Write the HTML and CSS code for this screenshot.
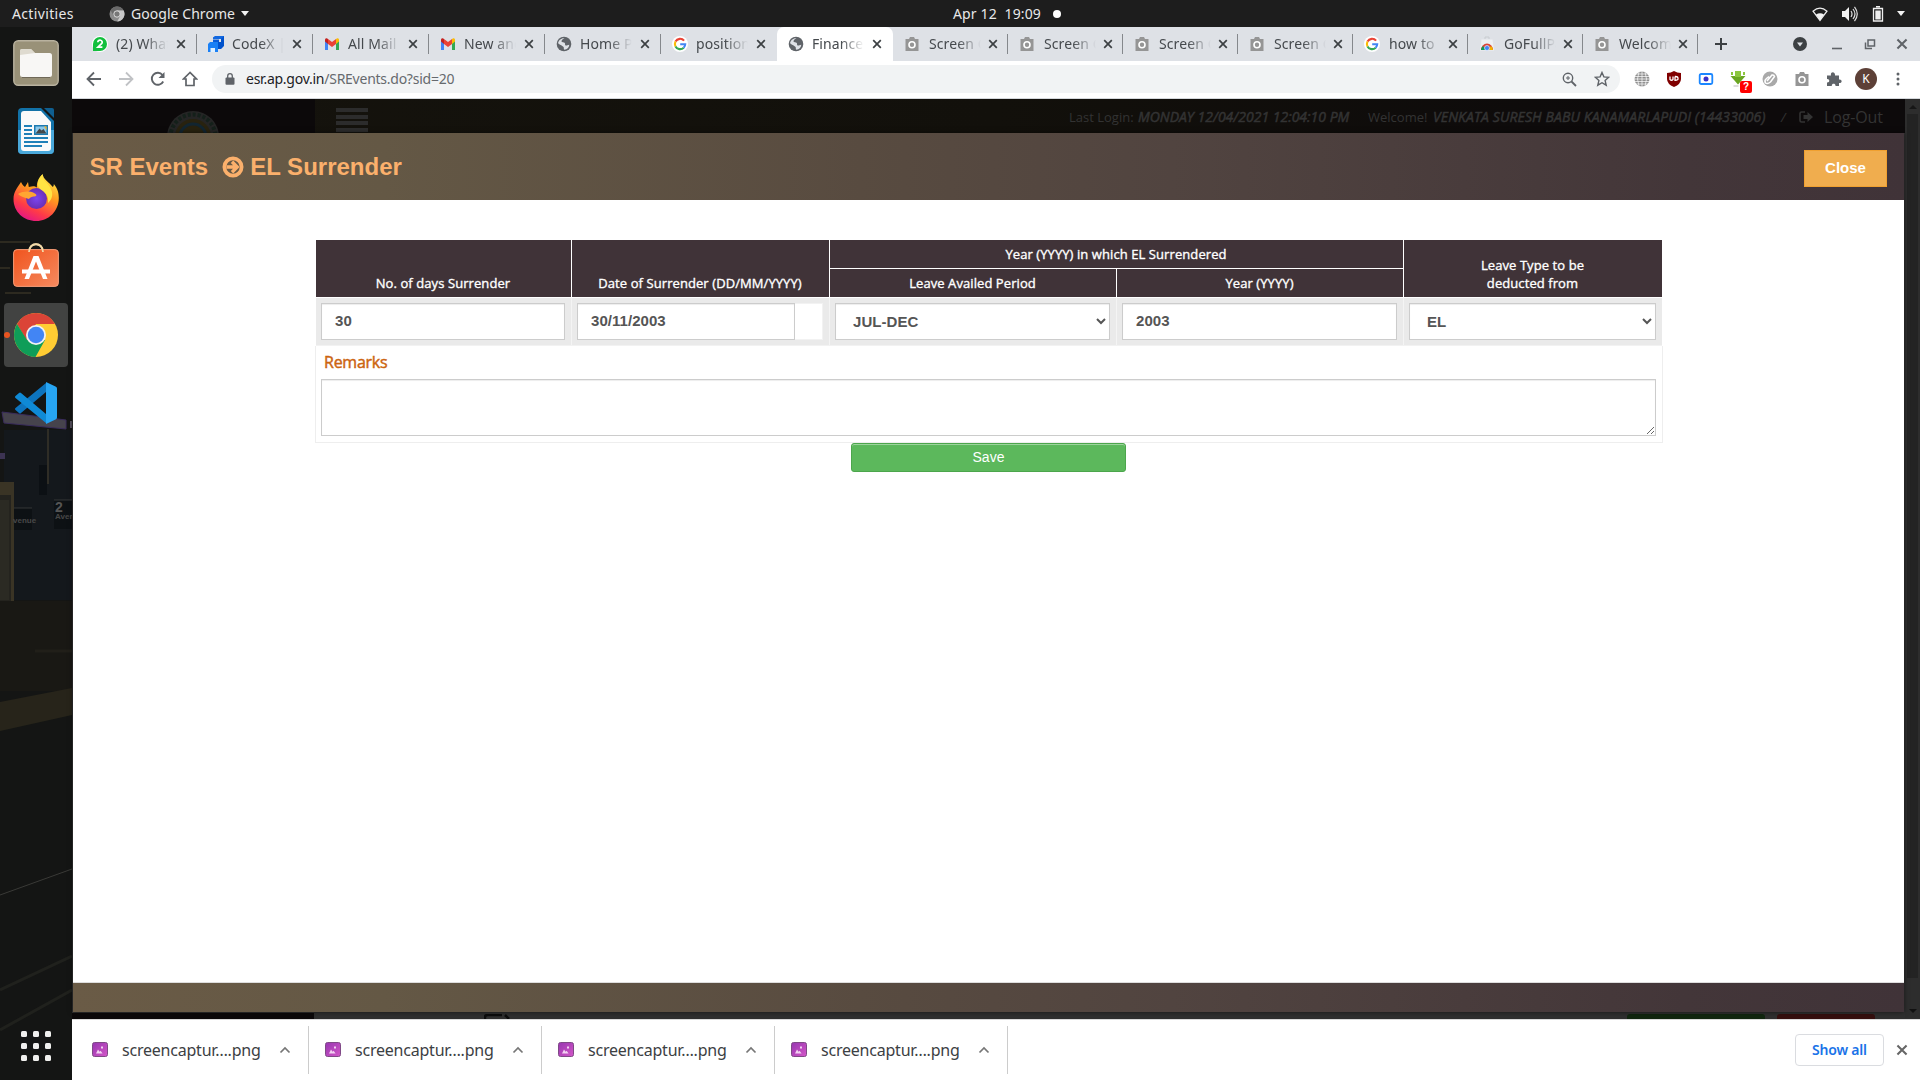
FILE: index.html
```html
<!DOCTYPE html>
<html lang="en">
<head>
<meta charset="utf-8">
<title>SR Events - EL Surrender</title>
<link rel="stylesheet" href="styles.css">
</head>
<body>
<svg class="defs" width="0" height="0">
  <defs>
    <linearGradient id="ffg" x1="0.8" y1="0" x2="0.3" y2="1"><stop offset="0" stop-color="#fff44f"/><stop offset=".4" stop-color="#ff9a1f"/><stop offset=".75" stop-color="#ff3b47"/><stop offset="1" stop-color="#e31587"/></linearGradient>
    <linearGradient id="png" x1="0" y1="0" x2="1" y2="1"><stop offset="0" stop-color="#9636b0"/><stop offset="1" stop-color="#d457c8"/></linearGradient>
    <linearGradient id="soft" x1="0" y1="0" x2="1" y2="1"><stop offset="0" stop-color="#f0541e"/><stop offset="1" stop-color="#f58a5f"/></linearGradient>
    <radialGradient id="fop"><stop offset="0" stop-color="#7b45f0"/><stop offset="1" stop-color="#6a2fb4"/></radialGradient>
  </defs>
  <symbol id="i-close" viewBox="0 0 10 10"><path d="M1.2 1.2l7.6 7.6M8.8 1.2L1.2 8.8" stroke="currentColor" stroke-width="1.7" fill="none"/></symbol>
  <symbol id="i-wa" viewBox="0 0 16 16"><circle cx="8" cy="8" r="8" fill="#fff"/><path d="M1 15V8a7 7 0 1 1 7 7H5z" fill="#12bf3d"/><path d="M5.8 6.2a2.2 2.1 0 1 1 4 1.2L5.900 11.2h4.5" stroke="#fff" stroke-width="1.7" fill="none"/></symbol>
  <symbol id="i-codex" viewBox="0 0 16 16"><path d="M5 2l3-2h8v10l-3 3h-3V6H5z" fill="#0052cc"/><path d="M5 1.500L7 0h9l-3 3H5z" fill="#1268e0"/><path d="M5 3h8v3H5z" fill="#dee1e6"/><path d="M5 3.500h6V6H5z" fill="#0a5bd6"/><path d="M0 8l2-2h8v10H0z" fill="#1a80f5"/><path d="M2.500 12h4.500v4H2.500z" fill="#dff0ff"/></symbol>
  <symbol id="i-gmail" viewBox="0 0 16 16"><path d="M1 3.500V14h3V6z" fill="#4285f4"/><path d="M15 3.500V14h-3V6z" fill="#34a853"/><path d="M4 3v5l4 3 4-3V3L8 6z" fill="#ea4335"/><path d="M1 5.500V4c0-1.600 1.700-2.200 3-1v5z" fill="#c5221f"/><path d="M15 5.500V4c0-1.600-1.700-2.200-3-1v5z" fill="#fbbc04"/></symbol>
  <symbol id="i-globe" viewBox="0 0 16 16"><circle cx="8" cy="8" r="7.300" fill="#5f6368"/><path d="M8.500 2.200c-2 1.200-3.200 2-3 3.400.2 1.200 2.600.6 3.300 1.500.7 1-.2 1.900.8 2.400 1 .4 2-.6 3.700-.7-.2 2.800-2.300 4.800-4.900 5-1-.8-.3-2-.8-2.800C6.700 9.600 4 9.200 2.100 7.200 2.400 4.300 5.300 1.700 8.500 2.200z" fill="#dee1e6"/></symbol>
  <symbol id="i-google" viewBox="0 0 16 16"><circle cx="8" cy="8" r="8" fill="#fff"/><g fill="none" stroke-width="2.100"><path d="M12.100 4.700A5.200 5.200 0 0 0 3.500 5.600" stroke="#ea4335"/><path d="M3.500 5.600a5.200 5.200 0 0 0 0 4.800" stroke="#fbbc05"/><path d="M3.500 10.400a5.200 5.200 0 0 0 8.200 1.300" stroke="#34a853"/><path d="M11.700 11.700A5.200 5.200 0 0 0 13.200 8.300H8.200" stroke="#4285f4"/></g></symbol>
  <symbol id="i-cam" viewBox="0 0 16 16"><path d="M5 3l1-2h4l1 2h3.500v12h-13V3z" fill="#959595"/><circle cx="8" cy="8.800" r="3" fill="none" stroke="#fff" stroke-width="1.600"/></symbol>
  <symbol id="i-store" viewBox="0 0 16 16"><path d="M2.500 3.500h11l1.500 11H1z" fill="#eef0f2"/><path d="M6 3V1h4v2" stroke="#c8ccd0" fill="none"/><path d="M2 14a6 6.500 0 0 1 12 0z" fill="#db4437"/><path d="M2 14a6 6 0 0 1 2-4l3 4z" fill="#0f9d58"/><path d="M14 14a6 6 0 0 0-2-4l-3 4z" fill="#f4b400"/><circle cx="8" cy="12" r="2.500" fill="#4285f4" stroke="#fff" stroke-width=".6"/></symbol>
  <symbol id="i-png" viewBox="0 0 16 16"><rect x=".5" y=".5" width="15" height="14" rx="2" fill="url(#png)" stroke="#7f4a86"/><path d="M4 11.500l2-4 1.600 2.200 1-1 2 2.800z" fill="#f3d2f2"/><rect x="9" y="4.500" width="2" height="2" fill="#f3d2f2"/></symbol>
  <symbol id="i-up" viewBox="0 0 12 8"><path d="M1.500 6.500L6 2l4.500 4.500" fill="none" stroke="#767676" stroke-width="1.700"/></symbol>
</svg>

<header class="topbar">
  <span class="activities">Activities</span>
  <svg class="app-ic" width="16" height="16" viewBox="0 0 16 16"><circle cx="8" cy="8" r="7.500" fill="#8b8b8b"/><path d="M8 .5a7.500 7.500 0 0 0-6.500 3.800L4.800 10 8 4.600h6.700A7.500 7.500 0 0 0 8 .5z" fill="#6a6a6a"/><path d="M8 4.600h6.700a7.500 7.500 0 0 1-6.500 10.900L11.200 10z" fill="#c9c9c9"/><circle cx="8" cy="8" r="3.200" fill="#777" stroke="#ddd"/></svg>
  <span class="app-name">Google Chrome</span>
  <i class="tri"></i>
  <span class="clock">Apr 12&nbsp; 19:09</span>
  <i class="dot"></i>
  <div class="status">
    <svg width="16" height="16" viewBox="0 0 16 16"><path d="M1 5.200Q8-.8 15 5.200L8 14.500z" fill="none" stroke="#eee" stroke-width="1.300"/><path d="M4 8.400q4-2.400 8 0L8 14.500z" fill="#f2f2f2"/></svg>
    <svg width="18" height="16" viewBox="0 0 18 16"><path d="M1 5h3l4-4v14l-4-4H1z" fill="#f2f2f2"/><path d="M10 5q2 3 0 6M12 3q4 5 0 10M13.500 .8q5.500 7.200 0 14.400" stroke="#ddd" stroke-width="1.200" fill="none"/></svg>
    <svg width="12" height="16" viewBox="0 0 12 16"><path d="M1.500 2.500h9v12.500h-9z" fill="none" stroke="#eee" stroke-width="1.300"/><path d="M4 .8h4" stroke="#eee" stroke-width="1.600"/><path d="M3.300 4.500h5.400v9H3.300z" fill="#eee"/></svg>
    <i class="tri"></i>
  </div>
</header>

<div class="desktop">
  <nav class="dock">
    <svg class="wallpaper" width="72" height="1053" viewBox="0 27 72 1053">
      <rect y="27" width="72" height="1053" fill="#141514"/>
      <path d="M0 242h30M0 268h10M5 293h26M8 345h60M4 319h40" stroke="#2d2a20" stroke-width="2"/>
      <path d="M2 412l64 8v9l-62-6z" fill="#46434c" stroke="#3a2c5c"/><path d="M70 421h2v7h-2z" fill="#56505e"/>
      <path d="M4 430h68v170H4z" fill="#14181c"/>
      <path d="M39 465h8v30h-8z" fill="#0c1014"/>
      <path d="M48 429v55" stroke="#39352a" stroke-width="1.500"/>
      <path d="M0 453h5v6H0z" fill="#3c3352"/>
      <path d="M0 482h14v119H0z" fill="#3a3425"/><path d="M0 495h11v106H0z" fill="#24231e"/><path d="M0 500h9v100H0z" fill="#2b2a23"/>
      <path d="M14 508h18v22H14zM54 500h18v29H54z" fill="#0d1114"/><path d="M54 500h18M14 508h18" stroke="#343636"/>
      <text x="55" y="512" class="sign-num">2</text><text x="55" y="519" class="sign-txt">Aver</text><text x="13" y="523" class="sign-txt">venue</text>
      <path d="M0 601h72v90H0z" fill="#191814"/>
      <path d="M0 702l72-14v27L0 731z" fill="#27241a"/><path d="M35 651h37" stroke="#211f19" stroke-width="3"/>
      <path d="M0 895l72-26" stroke="#3a3a37"/><path d="M0 990l72-34M0 1030l72-40" stroke="#20211d" stroke-width="3"/>
    </svg>
    <div class="slot"><svg width="46" height="46" viewBox="0 0 46 46"><rect x=".8" y=".8" width="44.400" height="44.400" rx="4.500" fill="#999178" stroke="#b9b29f" stroke-width="1.400"/><path d="M7 11q0-2 2-2h9l4 4v8H7z" fill="#dcd8cc"/><rect x="7" y="13" width="32" height="24" rx="2.500" fill="#f8f7f5"/><path d="M7 15v-4q0-2 2-2h9l4 4z" fill="#dfdbd0"/><path d="M9 37.500h28" stroke="#6f6857"/></svg></div>
    <div class="slot"><svg width="36" height="46" viewBox="0 0 36 46"><path d="M4 0h19l13 13v29q0 4-4 4H4q-4 0-4-4V4q0-4 4-4z" fill="#1272a8"/><path d="M0 22h36v20q0 4-4 4H4q-4 0-4-4z" fill="#4aa8da"/><path d="M6 3h17l10 11v26q0 3-3 3H6q-3 0-3-3V6q0-3 3-3z" fill="#fafafa"/><path d="M26 0h8q2 0 2 2v8z" fill="#0f5f90"/><path d="M6 18h8M6 22h8M6 26h8M6 30h24M6 34h24M6 38h18" stroke="#1f80b8" stroke-width="2"/><path d="M16 17h14v10H16z" fill="#1d7ab0"/><path d="M17.500 18.500h11v7h-11z" fill="#8cc8ea"/><path d="M17.500 25.500l4-5 2 2 2-1.500 3 4.500z" fill="#44484a"/><path d="M26 18.500h2.500V22z" fill="#f6b422"/></svg></div>
    <div class="slot lift1"><svg width="46" height="47" viewBox="0 0 46 47"><path d="M8 8c1 2 1.500 3 4 5l3-5 .8 5c4-1 6-1 8 .5 0-6 2-10 6-13.500 0 5 6 8 10 13 1-1 1-2 1-3 4 5 5 9 5 14 0 13-10 23-22.500 23S.500 38 .500 25C.500 18 4 14 8 8z" fill="url(#ffg)"/><circle cx="23.500" cy="24.500" r="10.500" fill="url(#fop)"/><path d="M5 20c5-3 12-3 16-1 2 1 3 2 2 3-2 1-5 0-7 3-3-1-8-2-11-5z" fill="#ffa632"/><path d="M29 1c0 6 8 8 10 17 1 6-2 9-4 11 1-7-3-11-8-14-4-4-2-10 2-14z" fill="#ffe443"/></svg></div>
    <div class="slot lift2"><svg width="46" height="44" viewBox="0 0 46 44"><path d="M16 9c0-10.500 14-10.500 14 0" fill="none" stroke="#f2d9a8" stroke-width="2"/><rect x=".6" y="6.600" width="44.800" height="36.800" rx="3.500" fill="url(#soft)" stroke="#f79d78"/><path d="M16 9c0-10.500 14-10.500 14 0" fill="none" stroke="#f2d9a8" stroke-width="1.800"/><path d="M20.500 13h5l9 23h-4.500L23 18.500 16 36h-4.500z" fill="#fff"/><path d="M9 26.500h28v4H9z" fill="#fff"/></svg></div>
    <div class="slot running"><i class="run-dot"></i><svg width="46" height="46" viewBox="0 0 46 46"><circle cx="23" cy="23" r="22" fill="#fc3"/><path d="M23 1A22 22 0 0 0 4 12l10 17 9-17h19A22 22 0 0 0 23 1z" fill="#db4437"/><path d="M4 12a22 22 0 0 0 18.500 33L32 28 14 28z" fill="#0f9d58"/><circle cx="23" cy="23" r="10" fill="#f1f1f1"/><circle cx="23" cy="23" r="8.200" fill="#4285f4"/></svg></div>
    <div class="slot"><svg width="42" height="42" viewBox="0 0 42 42"><path d="M31 10L6 31q-1 1-2 0l-3.500-3q-1-1 0-2L31 1z" fill="#0d74be"/><path d="M31 32L6 11q-1-1-2 0l-3.500 3q-1 1 0 2L31 41z" fill="#0f8ad6"/><path d="M31 0l9.500 4.500Q42 5 42 6.500v29q0 1.500-1.500 2L31 42z" fill="#27a5f3"/></svg></div>
    <div class="apps"><i></i><i></i><i></i><i></i><i></i><i></i><i></i><i></i><i></i></div>
  </nav>

  <main class="browser">
    <div class="tabs">
      <div class="tab"><svg><use href="#i-wa"/></svg><span>(2) What</span><svg class="x"><use href="#i-close"/></svg></div>
      <div class="tab"><svg><use href="#i-codex"/></svg><span>CodeX | C</span><svg class="x"><use href="#i-close"/></svg></div>
      <div class="tab"><svg><use href="#i-gmail"/></svg><span>All Mail</span><svg class="x"><use href="#i-close"/></svg></div>
      <div class="tab"><svg><use href="#i-gmail"/></svg><span>New and</span><svg class="x"><use href="#i-close"/></svg></div>
      <div class="tab"><svg><use href="#i-globe"/></svg><span>Home Pa</span><svg class="x"><use href="#i-close"/></svg></div>
      <div class="tab before"><svg><use href="#i-google"/></svg><span>position</span><svg class="x"><use href="#i-close"/></svg></div>
      <div class="tab active"><svg><use href="#i-globe"/></svg><span>Finance</span><svg class="x"><use href="#i-close"/></svg></div>
      <div class="tab s"><svg><use href="#i-cam"/></svg><span>Screen C</span><svg class="x"><use href="#i-close"/></svg></div>
      <div class="tab s"><svg><use href="#i-cam"/></svg><span>Screen C</span><svg class="x"><use href="#i-close"/></svg></div>
      <div class="tab s"><svg><use href="#i-cam"/></svg><span>Screen C</span><svg class="x"><use href="#i-close"/></svg></div>
      <div class="tab s"><svg><use href="#i-cam"/></svg><span>Screen C</span><svg class="x"><use href="#i-close"/></svg></div>
      <div class="tab s"><svg><use href="#i-google"/></svg><span>how to</span><svg class="x"><use href="#i-close"/></svg></div>
      <div class="tab s"><svg><use href="#i-store"/></svg><span>GoFullPa</span><svg class="x"><use href="#i-close"/></svg></div>
      <div class="tab s"><svg><use href="#i-cam"/></svg><span>Welcome</span><svg class="x"><use href="#i-close"/></svg></div>
      <svg class="plus" width="12" height="12" viewBox="0 0 12 12"><path d="M6 0v12M0 6h12" stroke="#3c4043" stroke-width="2"/></svg>
      <div class="winctl">
        <svg class="search" width="14" height="14" viewBox="0 0 14 14"><circle cx="7" cy="7" r="7" fill="#3c4043"/><path d="M4 5.500h6L7 9.500z" fill="#dee1e6"/></svg>
        <svg width="12" height="12" viewBox="0 0 12 12"><path d="M1 10.500h10" stroke="#5f6368" stroke-width="1.600"/></svg>
        <svg width="12" height="12" viewBox="0 0 12 12"><path d="M4 2h6.500v6H4zM1.500 4.500v6H8" fill="none" stroke="#5f6368" stroke-width="1.500"/></svg>
        <svg width="12" height="12" viewBox="0 0 10 10"><use href="#i-close"/></svg>
      </div>
    </div>

    <div class="toolbar">
      <svg class="nav" viewBox="0 0 16 16"><path d="M15 8H2M8 1.500L1.500 8 8 14.500" fill="none" stroke="#5f6368" stroke-width="1.800"/></svg>
      <svg class="nav" viewBox="0 0 16 16"><path d="M1 8h13M8 1.500L14.500 8 8 14.500" fill="none" stroke="#c0c2c5" stroke-width="1.800"/></svg>
      <svg class="nav" viewBox="0 0 16 16"><path d="M13.200 10.500A6 6 0 1 1 12.500 4" fill="none" stroke="#5f6368" stroke-width="1.900"/><path d="M14.500 1v6h-6z" fill="#5f6368"/></svg>
      <svg class="nav" viewBox="0 0 16 16"><path d="M8 1.500L1.500 8H4v6.500h8V8h2.500z" fill="none" stroke="#5f6368" stroke-width="1.700"/></svg>
      <div class="omni">
        <svg width="10" height="12" viewBox="0 0 10 12"><rect x=".5" y="4.500" width="9" height="7.300" rx="1" fill="#5f6368"/><path d="M2.700 5V3a2.300 2.300 0 0 1 4.600 0v2" fill="none" stroke="#5f6368" stroke-width="1.300"/></svg>
        <span class="url"><b>esr.ap.gov.in</b>/SREvents.do?sid=20</span>
        <svg width="15" height="15" viewBox="0 0 15 15"><circle cx="6" cy="6" r="4.700" fill="none" stroke="#5f6368" stroke-width="1.400"/><path d="M9.500 9.500l4.500 4.500" stroke="#5f6368" stroke-width="1.800"/><path d="M6 4v4M4 6h4" stroke="#5f6368"/></svg>
        <svg class="star" width="16" height="16" viewBox="0 0 16 16"><path d="M8 1.500l1.900 4.400 4.800.4-3.600 3.200 1.100 4.700L8 11.700l-4.200 2.500 1.100-4.700L1.300 6.300l4.800-.4z" fill="none" stroke="#5f6368" stroke-width="1.400"/></svg>
      </div>
      <div class="exts">
        <svg viewBox="0 0 16 16"><circle cx="8" cy="8" r="7.500" fill="#8f8f8f"/><path d="M0 5.500h16M0 10.500h16M8 0v16M0 8h16M5 1q-3 7 0 14M11 1q3 7 0 14M2 3h12M2 13h12" fill="none" stroke="#fff" stroke-width=".7"/></svg>
        <svg viewBox="0 0 16 16"><path d="M8 0q3 2 7 2v6q0 5-7 8-7-3-7-8V2q4 0 7-2z" fill="#800000"/><path d="M4 5.500v3q1.500 1.500 3 0v-3M9 5.500v3.800q3.500 0 3-2-.2-2-3-1.800" fill="none" stroke="#fff" stroke-width="1.300"/></svg>
        <svg viewBox="0 0 16 16"><rect x="1.700" y="3" width="12.600" height="10" rx="1.500" fill="#fff" stroke="#1a86ff" stroke-width="1.800"/><circle cx="8" cy="8" r="2.500" fill="#3a2fc8"/></svg>
        <span class="badged"><svg viewBox="0 0 16 16"><path d="M5 0h1.500v4H9.500V0H11v5h4.500L8 13.500.5 5H5z" fill="#6aa622"/><path d="M1 1h2v3H1zM13 1h2v3h-2zM5 0h6v6H5z" fill="#8cc63f"/><path d="M3.500 15h5" stroke="#bbb"/></svg><em>?</em></span>
        <svg viewBox="0 0 16 16"><circle cx="8" cy="8" r="7.500" fill="#a9a9a9"/><path d="M5 10l5-6q2-.5 2.500 1.500L8.500 11q-3 2.500-5 1-1.500-2.500 1-4.500l2.500-2" fill="none" stroke="#fff" stroke-width="1.500"/></svg>
        <svg viewBox="0 0 16 16"><use href="#i-cam"/></svg>
        <svg viewBox="0 0 16 16"><path d="M1 4.500h4c-1-4.500 4.500-4.500 4 0h4v4c3.500-.5 3.500 4 0 3.500V15H9.500c.3-3-4-3-3.700 0H1v-3.500c3 .3 3-3.800 0-3.500z" fill="#5f6368"/></svg>
        <span class="avatar">K</span>
        <svg viewBox="0 0 16 16"><g fill="#5f6368"><circle cx="8" cy="3" r="1.500"/><circle cx="8" cy="8" r="1.500"/><circle cx="8" cy="13" r="1.500"/></g></svg>
      </div>
    </div>

    <div class="viewport">
      <div class="under-head">
        <div class="brand"><svg width="52" height="22" viewBox="0 0 52 22"><circle cx="26" cy="26" r="26" fill="#252525"/><circle cx="26" cy="26" r="22.500" fill="none" stroke="#14201a" stroke-width="4" stroke-dasharray="3 2"/><circle cx="26" cy="26" r="18" fill="#28220f"/><circle cx="26" cy="26" r="13" fill="none" stroke="#122530" stroke-width="3"/></svg></div>
        <div class="burger"><i></i><i></i><i></i><i></i></div>
        <div class="login">
          <span class="w1">Last Login: </span><b class="w2">MONDAY 12/04/2021 12:04:10 PM</b>
          <span class="w3">Welcome! </span><b class="w4">VENKATA SURESH BABU KANAMARLAPUDI (14433006)</b>
          <span class="w5">/</span>
          <svg width="14" height="12" viewBox="0 0 14 12"><path d="M6 1H2.500Q1 1 1 2.500v7Q1 11 2.500 11H6" fill="none" stroke="#333" stroke-width="1.600"/><path d="M4.500 4h4V1L14 6l-5.500 5V8h-4z" fill="#333"/></svg>
          <span class="out">Log-Out</span>
        </div>
      </div>
      <div class="under-foot"><div class="side"></div><svg width="26" height="5" viewBox="0 0 26 5"><path d="M1 5V3q0-2 3-2h14M21 1l4 4" fill="none" stroke="#0c0c0c" stroke-width="2.500"/></svg><i class="g"></i><i class="r"></i></div>
      <div class="scroll"><i class="up"></i><i class="thumb"></i><i class="down"></i></div>

      <section class="modal">
        <div class="m-head">
          <h1>SR Events <svg width="22" height="22" viewBox="0 0 22 22"><circle cx="11" cy="11" r="8.600" fill="none" stroke="#fbb06c" stroke-width="3.800"/><path d="M4.500 11h10M10 5.800L15.200 11l-5.200 5.200" fill="none" stroke="#fbb06c" stroke-width="3.400"/></svg>EL Surrender</h1>
          <button class="close">Close</button>
        </div>
        <div class="m-body">
          <div class="form">
            <div class="row head">
              <div class="c tall">No. of days Surrender</div>
              <div class="c tall">Date of Surrender (DD/MM/YYYY)</div>
              <div class="c wide">Year (YYYY) in which EL Surrendered</div>
              <div class="c tall last">Leave Type to be<br>deducted from</div>
              <div class="c p">Leave Availed Period</div>
              <div class="c y">Year (YYYY)</div>
            </div>
            <div class="row vals">
              <div><input class="ctl" value="30"></div>
              <div class="date"><input class="ctl" value="30/11/2003"><i></i></div>
              <div><select class="ctl"><option>JUL-DEC</option></select></div>
              <div><input class="ctl" value="2003"></div>
              <div><select class="ctl"><option>EL</option></select></div>
            </div>
            <div class="remarks">
              <label>Remarks</label>
              <textarea class="ctl"></textarea>
            </div>
          </div>
          <button class="save">Save</button>
        </div>
        <div class="m-foot"></div>
      </section>
    </div>

    <footer class="downloads">
      <div class="dl"><svg><use href="#i-png"/></svg><span>screencaptur….png</span><svg class="up"><use href="#i-up"/></svg></div>
      <div class="dl"><svg><use href="#i-png"/></svg><span>screencaptur….png</span><svg class="up"><use href="#i-up"/></svg></div>
      <div class="dl"><svg><use href="#i-png"/></svg><span>screencaptur….png</span><svg class="up"><use href="#i-up"/></svg></div>
      <div class="dl"><svg><use href="#i-png"/></svg><span>screencaptur….png</span><svg class="up"><use href="#i-up"/></svg></div>
      <button class="showall">Show all</button>
      <svg class="dlx" width="12" height="12"><use href="#i-close"/></svg>
    </footer>
  </main>
</div>
</body>
</html>
```
FILE: styles.css
```css
* { box-sizing: border-box; }
body { margin: 0; width: 1920px; height: 1080px; overflow: hidden; background: #111; font-family: "Noto Sans", "Open Sans", sans-serif; }
svg { display: block; flex: none; }
.defs { position: absolute; }
button, input, select, textarea { font-family: inherit; margin: 0; }

/* system bar */
.topbar { height: 27px; background: #1d1d1d; color: #e8e8e8; font-size: 14px; line-height: 27px; display: flex; align-items: center; padding-left: 12px; white-space: nowrap; }
.activities { width: 97px; letter-spacing: .35px; }
.app-name { margin-left: 6px; width: 110px; letter-spacing: .05px; }
.tri { width: 0; height: 0; border: 4.5px solid transparent; border-top: 5.5px solid #f2f2f2; border-bottom: 0; }
.clock { margin-left: 704px; width: 100px; letter-spacing: .15px; }
.dot { width: 8px; height: 8px; border-radius: 50%; background: #fff; }
.status { margin-left: auto; display: flex; align-items: center; gap: 13px; padding-right: 15px; }

/* dock */
.desktop { display: flex; height: 1053px; }
.dock { width: 72px; position: relative; display: flex; flex-direction: column; gap: 4px; padding: 4px 4px 0; }
.wallpaper { position: absolute; left: 0; top: 0; }
.sign-num { font: bold 14px "Liberation Sans", sans-serif; fill: #555; }
.sign-txt { font: bold 8px "Liberation Sans", sans-serif; fill: #484848; }
.slot { position: relative; width: 64px; height: 64px; display: flex; align-items: center; justify-content: center; border-radius: 4px; }
.lift1 { padding-bottom: 3px; }
.lift2 { padding-bottom: 5px; }
.running { background: #424342; }
.run-dot { position: absolute; left: 0; top: 29px; width: 6px; height: 6px; border-radius: 50%; background: #e95420; }
.apps { position: relative; margin: auto 0 19px 17px; display: grid; grid-template-columns: repeat(3, 6px); gap: 6px; }
.apps i { height: 6px; border-radius: 1.5px; background: #f0f0ee; }

/* browser chrome */
.browser { width: 1848px; display: flex; flex-direction: column; }
.tabs { height: 34px; background: #dee1e6; padding-left: 9px; display: flex; align-items: center; color: #45494d; }
.tab { position: relative; width: 116px; height: 34px; padding: 0 11px 0 11px; display: flex; align-items: center; }
.tab.s { width: 115px; padding-right: 10px; }
.tab svg { width: 16px; height: 16px; }
.tab svg.x { width: 10px; height: 10px; margin-left: auto; color: #3c4043; }
.tab span { margin-left: 8px; width: 52px; overflow: hidden; white-space: nowrap; font-size: 14px; line-height: 20px; letter-spacing: .1px; -webkit-mask-image: linear-gradient(90deg, #000 55%, transparent 100%); mask-image: linear-gradient(90deg, #000 55%, transparent 100%); }
.tab.s span { margin-left: 9px; }
.tab::after { content: ""; position: absolute; right: 0; top: 7px; width: 1px; height: 20px; background: #85888c; }
.tab.before::after, .tab.active::after { display: none; }
.tab.active { background: #fff; border-radius: 7px 7px 0 0; }
.plus { margin-left: 17px; }
.winctl { margin-left: auto; display: flex; align-items: center; gap: 20.500px; padding-right: 12px; color: #5f6368; }
.search { margin-right: 4px; }
.toolbar { height: 38px; background: #fff; border-bottom: 1px solid #d5d8dc; display: flex; align-items: center; padding: 0 0 1px 14px; }
.nav { width: 16px; height: 16px; margin-right: 16px; }
.omni { margin-left: -2px; margin-top: 0; width: 1408px; height: 28px; border-radius: 14px; background: #f1f3f4; display: flex; align-items: center; padding: 0 10px 0 13px; }
.url { margin: -2px auto 0 11px; font-size: 14px; color: #666a6e; letter-spacing: -.25px; }
.url b { font-weight: 400; color: #202124; }
.star { margin-left: 17px; }
.exts { display: flex; align-items: center; gap: 16px; margin-left: 14px; }
.exts svg { width: 16px; height: 16px; }
.badged { position: relative; }
.badged em { position: absolute; left: 10px; top: 10px; width: 12px; height: 12px; border-radius: 2px; background: #f00; color: #fff; font: bold 10px/12px "Liberation Sans", sans-serif; text-align: center; }
.avatar { width: 22px; height: 22px; margin: 0 -3px; border-radius: 50%; background: #5d4037; color: #fff; font-size: 12px; line-height: 22px; text-align: center; }

/* page dimmed beneath the dialog */
.viewport { position: relative; height: 920px; background: #2f2f2f; display: flex; flex-direction: column; }
.under-head { height: 34px; display: flex; background: linear-gradient(90deg, #15130d, #12100b 50%, #0d0a0b 85%); }
.brand { width: 243px; background: #0c090a; padding: 12px 0 0 95px; }
.burger { margin: 9px 0 0 21px; width: 32px; display: flex; flex-direction: column; gap: 2.500px; }
.burger i { height: 4px; background: #2c2c2c; }
.login { margin-left: 701px; display: flex; align-items: center; height: 35px; white-space: nowrap; color: #333; font-family: "Open Sans", sans-serif; font-size: 13px; }
.login b { font-weight: 400; font-style: italic; font-size: 14px; -webkit-text-stroke: .5px #333; }
.w1 { width: 69px; }
.w2 { width: 230px; }
.w3 { width: 65px; }
.w4 { width: 348px; letter-spacing: .1px; }
.w5 { width: 18px; font-style: italic; }
.out { margin-left: 11px; font-size: 16px; letter-spacing: -.15px; }
.under-foot { margin-top: auto; height: 6px; display: flex; align-items: flex-end; }
.side { width: 242px; height: 6px; background: #0c090a; margin-right: 170px; }
.under-foot i { height: 5px; border-radius: 3px 3px 0 0; }
.g { width: 138px; background: #11260f; margin-left: 1117px; }
.r { width: 98px; background: #350f0e; margin-left: 12px; }
.scroll { position: absolute; right: 0; top: 0; width: 15px; height: 919px; background: #2d2d2d; padding: 6px 2px 5px; display: flex; flex-direction: column; }
.scroll .up, .scroll .down { width: 0; margin-left: 2px; border: 4px solid transparent; border-top: 0; border-bottom-color: #161616; }
.scroll .down { margin-top: auto; border-top: 4px solid #111; border-bottom: 0; }
.scroll .thumb { margin-top: 5px; height: 864px; background: #232323; }

/* dialog */
.modal { position: absolute; left: 1px; top: 34px; width: 1831px; height: 879px; display: flex; flex-direction: column; background: #fff; box-shadow: 0 0 5px rgba(0,0,0,.5); }
.m-head, .m-foot { background: linear-gradient(90deg, #6a5b46, #645845 17%, #584b40 43%, #514440 60%, #433639 88%, #403338); }
.m-head { height: 67px; display: flex; align-items: center; justify-content: space-between; padding: 0 17px 0 16.5px; }
h1 { margin: 0; display: flex; align-items: center; font: bold 24px/28px "Liberation Sans", sans-serif; color: #fbb06c; }
h1 svg { margin: 0 6px 0 14px; }
.close { width: 83px; height: 37px; margin-top: 3px; padding: 0 0 1px; background: #f0ad4e; border: 1px solid #f0a030; color: #fff; font: bold 15px "Liberation Sans", sans-serif; }
.m-body { flex: 1; padding: 40px 0 0 243px; }
.m-foot { height: 30px; border-top: 1px solid #ddd; }
.form { width: 1346px; font-family: "Open Sans", sans-serif; }
.row { display: grid; grid-template-columns: 255px 257px 286px 286px 258px; column-gap: 1px; }
.head { grid-template-rows: 28px 28px; row-gap: 1px; background: #fff; }
.c { background: #403338; color: #fff; font-size: 13px; line-height: 18px; letter-spacing: .08px; -webkit-text-stroke: .35px #fff; text-align: center; display: flex; align-items: flex-end; justify-content: center; padding: 0 1px 5px 0; }
.tall { grid-row: 1 / 3; }
.wide { grid-column: 3 / 5; }
.last { grid-column: 5; }
.p { grid-column: 3; grid-row: 2; }
.y { grid-column: 4; grid-row: 2; }
.vals { margin-top: 1px; background: #f4f4f4; border-bottom: 1px solid #f2f2f2; }
.vals > div { background: #eaeaea; height: 47px; padding: 5px 6px 5px 5px; display: flex; }
.ctl { width: 100%; height: 37px; border: 1px solid #ccc; border-radius: 0; background: #fff; color: #555; padding: 0 12px 2px 13px; font: bold 15px "Liberation Sans", sans-serif; letter-spacing: .05px; box-shadow: inset 0 1px 1px rgba(0,0,0,.075); }
select.ctl { padding: 0 1px 0 13px; }
.date .ctl { width: 218px; flex: none; }
.date i { flex: 1; background: #fff; border: 1px solid #f2f2f2; border-left: 0; }
.remarks { height: 97px; border: 1px solid #eee; border-top: 0; margin-left: -1px; width: 1348px; padding: 5px 5px 0; }
.remarks label { display: block; height: 28px; padding-left: 3px; font-size: 16px; line-height: 22px; color: #cc6410; -webkit-text-stroke: .45px #cc6410; letter-spacing: -.25px; }
textarea.ctl { display: block; height: 57px; width: 1335px; }
.save { display: block; margin-left: 535px; width: 275px; height: 29px; padding: 0 0 2px; background: #5cb85c; border: 1px solid #4ca64c; border-radius: 3px; color: #fff; font: 14px "Liberation Sans", sans-serif; box-shadow: inset 0 1px 0 rgba(255,255,255,.4); }

/* download shelf */
.downloads { height: 61px; background: #fff; border-top: 1px solid #d8d8d8; display: flex; align-items: center; padding: 0 12px 1px 4px; }
.dl { width: 233px; height: 48px; border-right: 1px solid #ccc; display: flex; align-items: center; padding: 0 17px 0 16px; color: #3c4043; }
.dl svg { width: 16px; height: 16px; }
.dl span { margin: 1px 0 0 14px; font-size: 16px; letter-spacing: -.22px; white-space: nowrap; }
.dl svg.up { width: 12px; height: 8px; margin-left: auto; }
.showall { margin-left: auto; width: 89px; height: 32px; background: #fff; border: 1px solid #dadce0; border-radius: 4px; color: #1a73e8; font-size: 14px; font-weight: 600; letter-spacing: -.2px; padding: 0; white-space: nowrap; }
.dlx { margin-left: 12px; color: #666; }
```
